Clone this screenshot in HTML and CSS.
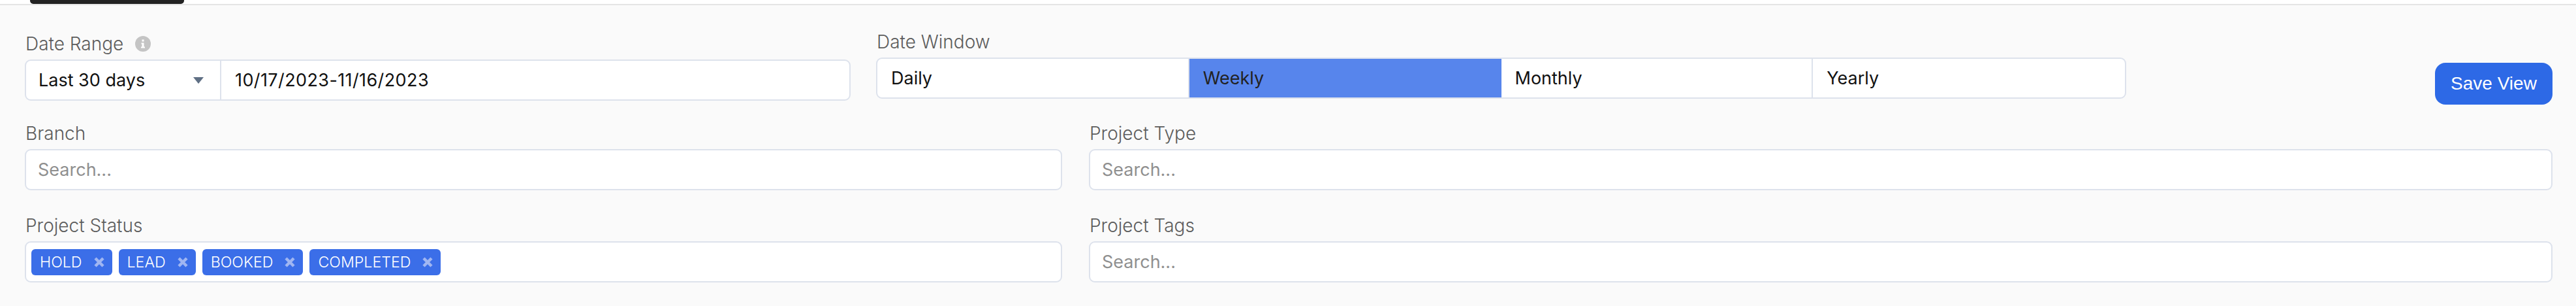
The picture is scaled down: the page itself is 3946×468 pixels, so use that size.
FILE: index.html
```html
<!DOCTYPE html>
<html lang="en">
<head>
    <meta charset="UTF-8">
    <meta name="viewport" content="width=device-width, initial-scale=1.0">
    <title>Project Filters</title>
    <link rel="stylesheet" href="styles.css">
</head>
<body>

<div class="topbar">
    <div class="active-tab"></div>
</div>

<div class="filters">
    <div class="row row-top">
        <div class="field field-range">
            <label class="label">Date Range
                <svg class="info" viewBox="0 0 24 24"><circle cx="12" cy="12" r="12" fill="#c4c4c4"/><path d="M9.5 10.5h4v6h1.5v2h-6v-2h1.5v-4h-1z" fill="#fff"/><rect x="10.5" y="5.5" width="3" height="3" fill="#fff"/></svg>
            </label>
            <div class="box range-box">
                <div class="range-select">
                    <span>Last 30 days</span>
                    <span class="caret"></span>
                </div>
                <div class="range-dates">10/17/2023-11/16/2023</div>
            </div>
        </div>
        <div class="field field-window">
            <label class="label">Date Window</label>
            <div class="box window-box">
                <div class="segment">Daily</div>
                <div class="segment active">Weekly</div>
                <div class="segment">Monthly</div>
                <div class="segment">Yearly</div>
            </div>
        </div>
        <button class="save-btn">Save View</button>
    </div>

    <div class="row row-grid">
        <div class="field">
            <label class="label">Branch</label>
            <div class="box search">Search...</div>
        </div>
        <div class="field">
            <label class="label">Project Type</label>
            <div class="box search">Search...</div>
        </div>
    </div>

    <div class="row row-grid">
        <div class="field">
            <label class="label">Project Status</label>
            <div class="box chips">
                <span class="chip">HOLD <svg class="chip-x" viewBox="0 0 16 16"><path d="M2 2 L14 14 M14 2 L2 14"/></svg></span>
                <span class="chip">LEAD <svg class="chip-x" viewBox="0 0 16 16"><path d="M2 2 L14 14 M14 2 L2 14"/></svg></span>
                <span class="chip">BOOKED <svg class="chip-x" viewBox="0 0 16 16"><path d="M2 2 L14 14 M14 2 L2 14"/></svg></span>
                <span class="chip">COMPLETED <svg class="chip-x" viewBox="0 0 16 16"><path d="M2 2 L14 14 M14 2 L2 14"/></svg></span>
            </div>
        </div>
        <div class="field">
            <label class="label">Project Tags</label>
            <div class="box search">Search...</div>
        </div>
    </div>
</div>

</body>
</html>
```
FILE: styles.css
```css
* {
    box-sizing: border-box;
}
body {
    margin: 0;
    height: 468px;
    overflow: hidden;
    background-color: #fafafa;
    font-family: "Inter", sans-serif;
}
.topbar {
    height: 8px;
    padding-left: 46px;
    background-color: #ffffff;
    border-bottom: 2px solid #e5e5e5;
}
.active-tab {
    width: 236px;
    height: 6px;
    background-color: #222222;
    border-radius: 0 0 5px 5px;
}
.filters {
    padding: 40px 36px 0 38px;
}
.row {
    margin-bottom: 35px;
}
.row-top {
    display: flex;
    align-items: flex-start;
    gap: 39px;
    margin-bottom: 25px;
}
.row-grid {
    display: grid;
    grid-template-columns: 1589px 1fr;
    gap: 41px;
}
.label {
    display: flex;
    align-items: center;
    gap: 18px;
    height: 38px;
    margin-bottom: 5px;
    padding-left: 1px;
    font-size: 28px;
    font-weight: 300;
    color: #5c5c5c;
}
.info {
    width: 24px;
    height: 24px;
}
.box {
    height: 63px;
    background-color: #ffffff;
    border: 2px solid #dde2ec;
    border-radius: 9px;
    font-size: 27px;
    color: #111111;
}
.field-range {
    width: 1265px;
}
.field-window {
    width: 1915px;
    margin-top: -3px;
}
.range-box {
    display: flex;
    align-items: center;
}
.range-select {
    display: flex;
    align-items: center;
    justify-content: space-between;
    width: 299px;
    height: 100%;
    padding: 0 25px 0 19px;
    border-right: 2px solid #dde2ec;
}
.caret {
    width: 0;
    height: 0;
    border-left: 8px solid transparent;
    border-right: 8px solid transparent;
    border-top: 10px solid #5f6f84;
}
.range-dates {
    padding-left: 21px;
    letter-spacing: 0.4px;
}
.window-box {
    display: grid;
    grid-template-columns: repeat(4, 1fr);
    overflow: hidden;
}
.segment {
    display: flex;
    align-items: center;
    padding-left: 21px;
    border-right: 2px solid #dde2ec;
}
.segment:last-child {
    border-right: none;
}
.segment.active {
    background-color: #5785ec;
    color: #222222;
    border-right: none;
}
.save-btn {
    width: 180px;
    height: 64px;
    margin-top: 48px;
    margin-left: auto;
    border: none;
    border-radius: 16px;
    background-color: #2d69e6;
    color: #ffffff;
    font-family: "Liberation Sans", sans-serif;
    font-size: 28px;
}
.search {
    display: flex;
    align-items: center;
    padding-left: 18px;
    color: #8f8f8f;
}
.chips {
    display: flex;
    align-items: center;
    gap: 10px;
    padding-left: 8px;
}
.chip {
    display: flex;
    align-items: center;
    gap: 18px;
    height: 40px;
    padding: 0 12px 0 13px;
    border-radius: 6px;
    background-color: #3b6ee8;
    color: #ffffff;
    font-size: 23.2px;
    font-weight: 300;
}
.chip-x {
    width: 16px;
    height: 16px;
    fill: none;
    stroke: #a0b6f2;
    stroke-width: 4.5;
}
```
